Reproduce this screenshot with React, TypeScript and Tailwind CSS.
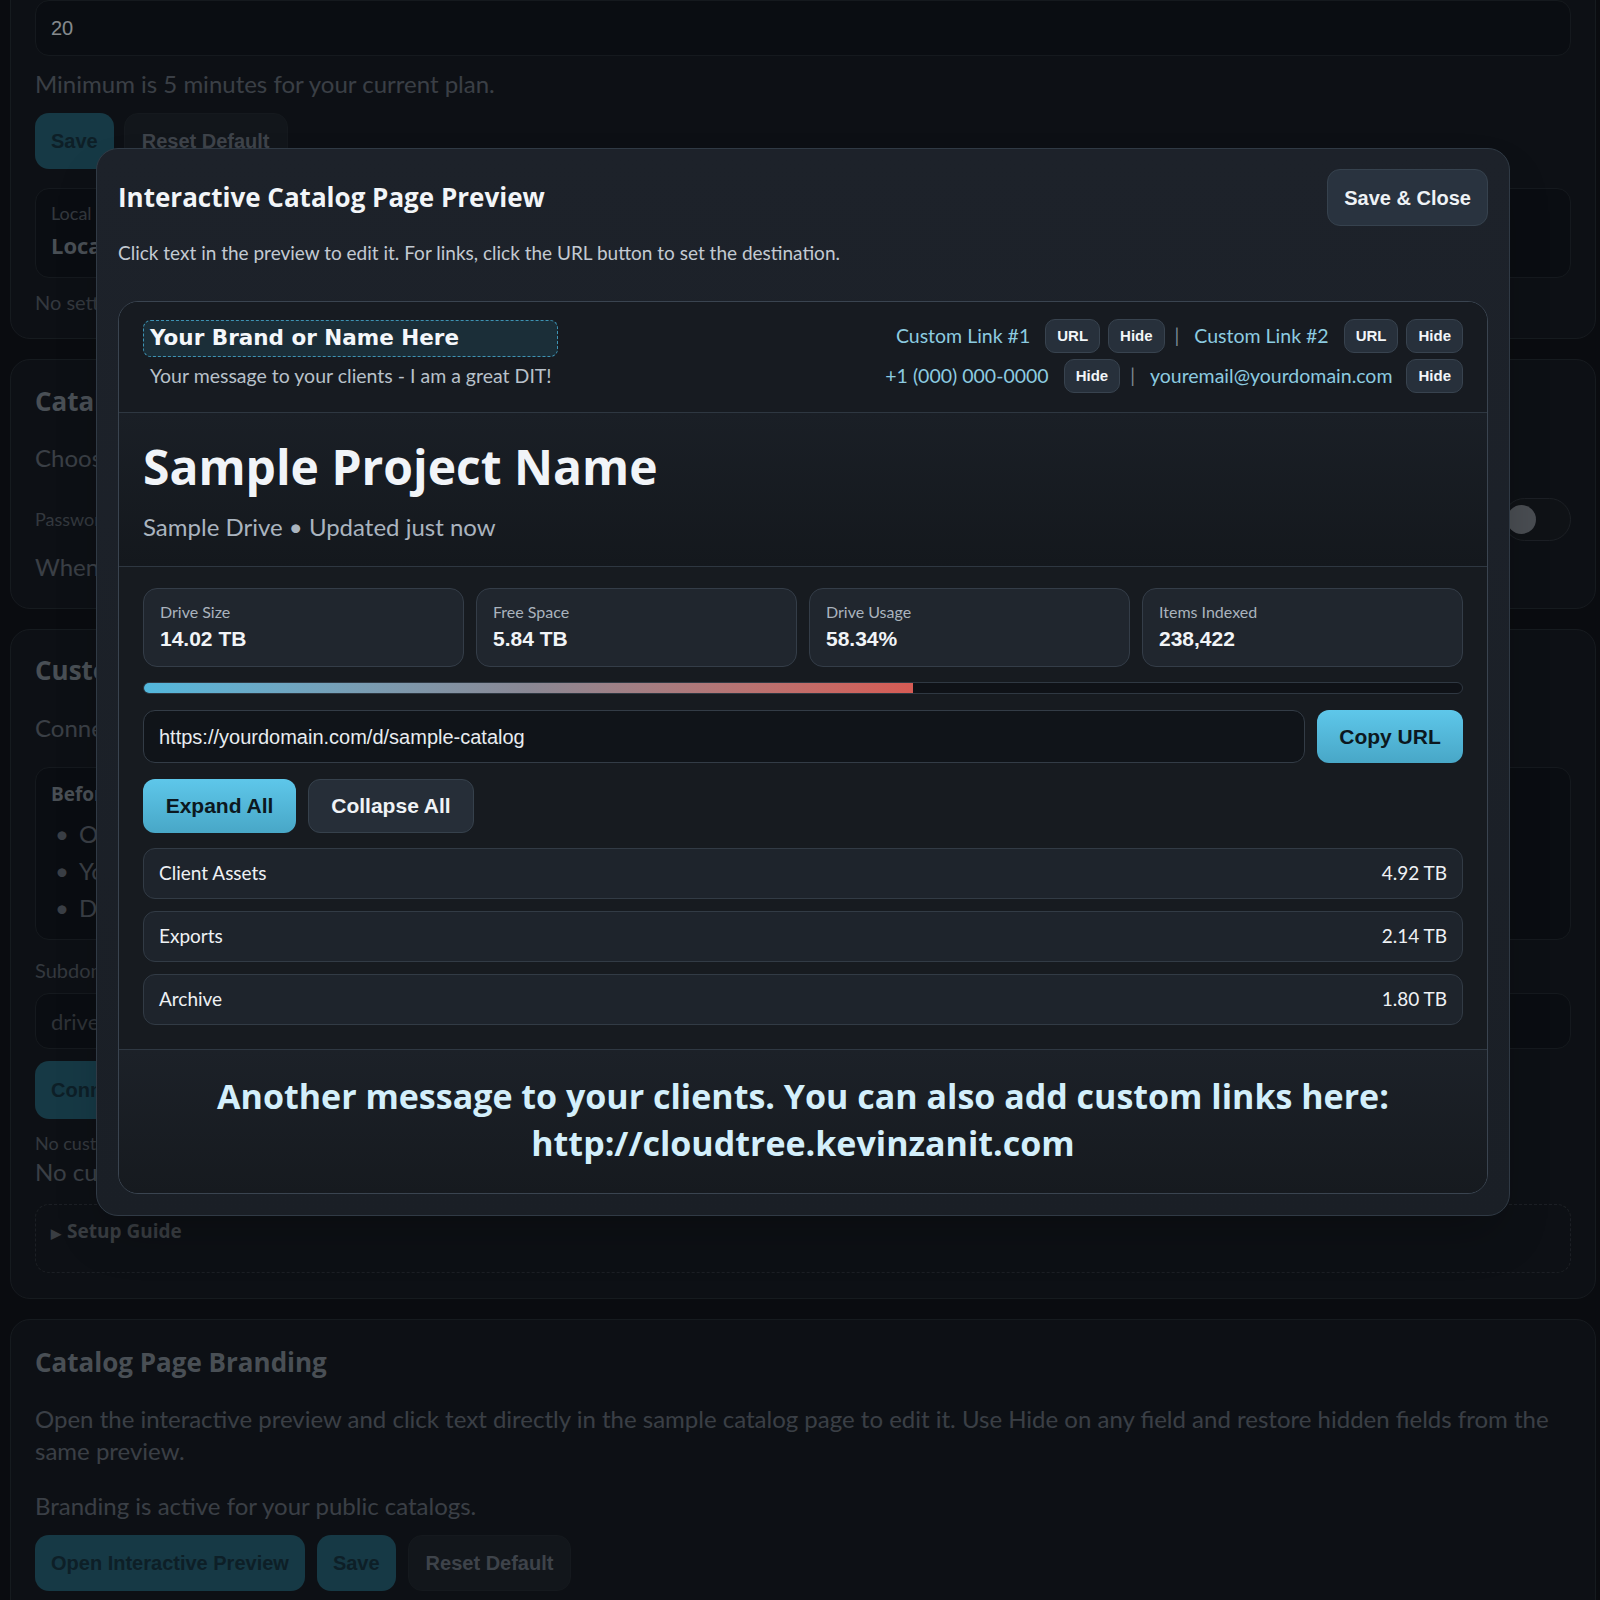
import React from "react";

const lato = "font-['Lato','Noto_Sans',sans-serif]";
const heavy = "font-['Open_Sans','Lato',sans-serif]";
const black = "font-['DejaVu_Sans','Open_Sans',sans-serif]";
const helv = "font-['Liberation_Sans','Arial',sans-serif]";

// background page (sits behind the dimming overlay)
const card = "rounded-[20px] border border-[#262d35] bg-[#171c23] px-6";
const box = "rounded-[14px] border border-[#232a32] bg-[#12171e]";
const tealBtn = `h-[56px] rounded-[14px] bg-[#265f73] px-[16px] text-[20px] font-bold text-[#173441] ${helv}`;
const resetBtn = `h-[56px] rounded-[14px] border border-[#232a32] bg-[#1e252d] px-[17px] text-[20px] font-bold text-[#68707c] ${helv}`;

function SmallBtn({ children }: { children: React.ReactNode }) {
  return (
    <button
      className={`h-[34px] rounded-[10px] border border-[#38434f] bg-[#27303b] px-[11px] text-[15px] font-bold text-[#f2f5f8] ${helv}`}
    >
      {children}
    </button>
  );
}

function Sep() {
  return <span className="ml-[10px] mr-[15px] text-[19px] text-[#7d8994]">|</span>;
}

function Stat({ label, value }: { label: string; value: string }) {
  return (
    <div className="rounded-[14px] border border-[#343d48] bg-[#20262e] px-4 pt-[13px] pb-[14px]">
      <div className="text-[16px] leading-[20px] text-[#aab3bd]">{label}</div>
      <div className={`mt-[4px] text-[21px] leading-[26px] font-bold text-[#f1f4f7] ${helv}`}>{value}</div>
    </div>
  );
}

function FolderRow({ name, size }: { name: string; size: string }) {
  return (
    <div className="flex h-[51px] items-center justify-between rounded-[12px] border border-[#323b45] bg-[#1e242c] px-[15px] text-[19px] text-[#eef1f4]">
      <span>{name}</span>
      <span>{size}</span>
    </div>
  );
}

function BackgroundPage() {
  return (
    <div className="flex flex-col gap-[20px] pl-[10px] pr-[4px]">
      <div className={`${card} -mt-[25px] pt-6 pb-[23px]`}>
        <div className={`${box} flex h-[56px] items-center px-[15px] text-[20px] text-[#dfe4ea] ${helv}`}>20</div>
        <p className="mt-[13px] text-[24px] leading-[30px] text-[#626a75]">Minimum is 5 minutes for your current plan.</p>
        <div className="mt-[14px] flex gap-[10px]">
          <button className={tealBtn}>Save</button>
          <button className={resetBtn}>Reset Default</button>
        </div>
        <div className={`${box} mt-[19px] h-[90px] px-[15px] pt-[13px]`}>
          <div className="text-[18px] leading-[22px] text-[#565e68]">Local Storage</div>
          <div className={`mt-[6px] text-[22px] leading-[30px] font-bold text-[#7b848e] ${heavy}`}>Local Drive</div>
        </div>
        <p className="mt-[11px] text-[20px] leading-[26px] text-[#565e68]">No settings changed yet.</p>
      </div>

      <div className={`${card} pt-6 pb-[26px]`}>
        <h2 className={`text-[26px] leading-[34px] font-bold text-[#7b848e] ${heavy}`}>Catalog Access</h2>
        <p className="mt-[25px] text-[24px] leading-[30px] text-[#626a75]">Choose who can view your catalogs.</p>
        <div className="mt-[25px] flex h-[43px] items-center justify-between">
          <span className="text-[18px] text-[#565e68]">Password protection</span>
          <div className="flex h-[43px] w-[68px] items-center rounded-full border border-[#2f353e] bg-[#191e25] px-[3px]">
            <div className="h-[29px] w-[29px] rounded-full bg-[#7b8089]" />
          </div>
        </div>
        <p className="mt-[11px] text-[24px] leading-[30px] text-[#626a75]">When enabled, visitors need a password.</p>
      </div>

      <div className={`${card} pt-[23px] pb-[25px]`}>
        <h2 className={`text-[26px] leading-[34px] font-bold text-[#7b848e] ${heavy}`}>Custom Domain</h2>
        <p className="mt-[26px] text-[24px] leading-[30px] text-[#626a75]">Connect your own subdomain.</p>
        <div className={`${box} mt-[24px] h-[173px] px-[15px] pt-[13px]`}>
          <div className={`text-[19px] leading-[26px] font-bold text-[#7b848e] ${heavy}`}>Before you start</div>
          <ul className="mt-[8px] text-[24px] leading-[37px] text-[#626a75]">
            <li className="flex gap-[10px] pl-[4px]"><span>•</span>Open your DNS provider</li>
            <li className="flex gap-[10px] pl-[4px]"><span>•</span>You need a CNAME record</li>
            <li className="flex gap-[10px] pl-[4px]"><span>•</span>DNS can take a while</li>
          </ul>
        </div>
        <div className="mt-[17px] text-[20px] leading-[26px] text-[#565e68]">Subdomain</div>
        <div className={`${box} mt-[10px] flex h-[56px] items-center px-[15px] text-[22px] text-[#4d545d]`}>drive.yourdomain.com</div>
        <button className={`${tealBtn} mt-[12px] h-[58px]`}>Connect Domain</button>
        <p className="mt-[13px] text-[18px] leading-[22px] text-[#565e68]">No custom domain yet.</p>
        <p className="mt-[3px] text-[24px] leading-[30px] text-[#626a75]">No custom domain connected.</p>
        <div className={`mt-[17px] h-[69px] rounded-[14px] border border-dashed border-[#2f353e] px-[15px] pt-[13px] text-[19px] leading-[26px] font-bold text-[#60676f] ${heavy}`}>
          <span className="mr-[6px] text-[13px]">▶</span>Setup Guide
        </div>
      </div>

      <div className={`${card} pt-[25px] pb-[30px]`}>
        <h2 className={`text-[26px] leading-[34px] font-bold text-[#7b848e] ${heavy}`}>Catalog Page Branding</h2>
        <p className="mt-[24px] text-[24px] leading-[32px] text-[#626a75]">
          Open the interactive preview and click text directly in the sample catalog page to edit it. Use Hide on any field and restore hidden fields from the same preview.
        </p>
        <p className="mt-[23px] text-[24px] leading-[32px] text-[#626a75]">Branding is active for your public catalogs.</p>
        <div className="mt-[13px] flex gap-[12px]">
          <button className={tealBtn}>Open Interactive Preview</button>
          <button className={tealBtn}>Save</button>
          <button className={resetBtn}>Reset Default</button>
        </div>
      </div>
    </div>
  );
}

function PreviewModal() {
  const cyan = `rounded-[12px] bg-gradient-to-b from-[#5ec7ea] to-[#48a7c7] text-[21px] font-bold text-[#0c1820] ${helv}`;
  return (
    <div className="absolute left-[96px] top-[148px] w-[1414px] rounded-[22px] border border-[#303a45] bg-gradient-to-b from-[#1d222a] to-[#1a1f26] px-[21px] pt-[20px] pb-[21px] shadow-2xl">
      <div className="flex items-center justify-between">
        <h1 className={`text-[26px] font-bold text-[#f2f5f8] ${heavy}`}>Interactive Catalog Page Preview</h1>
        <button
          className={`h-[57px] rounded-[13px] border border-[#36424e] bg-[#29333f] px-[16px] text-[20px] font-bold text-[#eef2f5] ${helv}`}
        >
          Save &amp; Close
        </button>
      </div>
      <p className="mt-[14px] text-[19px] leading-[26px] text-[#c3cad2]">
        Click text in the preview to edit it. For links, click the URL button to set the destination.
      </p>

      <div className="mt-[35px] overflow-hidden rounded-[20px] border border-[#3a4450] bg-[#15191e]">
        <div className="flex items-start justify-between border-b border-[#2e3741] bg-[#171b21] px-6 pt-[17px] pb-[19px]">
          <div>
            <div className={`mt-[1px] flex h-[37px] w-[415px] items-center rounded-[8px] border border-dashed border-[#3d93b4] bg-[#1b2e38] px-[6px] text-[21.5px] font-bold text-[#f4f7fa] ${black}`}>
              Your Brand or Name Here
            </div>
            <p className="mt-[7px] pl-[7px] text-[19.5px] leading-[24px] text-[#b8c1ca]">
              Your message to your clients - I am a great DIT!
            </p>
          </div>
          <div className="flex flex-col items-end gap-[6px]">
            <div className="flex items-center">
              <span className="text-[19.5px] text-[#8ccbe0]">Custom Link #1</span>
              <div className="ml-[15px] flex gap-2">
                <SmallBtn>URL</SmallBtn>
                <SmallBtn>Hide</SmallBtn>
              </div>
              <Sep />
              <span className="text-[19.5px] text-[#8ccbe0]">Custom Link #2</span>
              <div className="ml-[15px] flex gap-2">
                <SmallBtn>URL</SmallBtn>
                <SmallBtn>Hide</SmallBtn>
              </div>
            </div>
            <div className="flex items-center">
              <span className="text-[19.5px] text-[#8ccbe0]">+1 (000) 000-0000</span>
              <div className="ml-[15px]">
                <SmallBtn>Hide</SmallBtn>
              </div>
              <Sep />
              <span className="text-[19.5px] text-[#8ccbe0]">youremail@yourdomain.com</span>
              <div className="ml-[14px]">
                <SmallBtn>Hide</SmallBtn>
              </div>
            </div>
          </div>
        </div>

        <div className="border-b border-[#2e3741] bg-gradient-to-b from-[#1a1f26] to-[#14181d] px-6 pt-[24px] pb-[23px]">
          <h2 className={`text-[48px] leading-[60px] font-bold text-[#f1f4f8] ${heavy}`}>Sample Project Name</h2>
          <p className="mt-[14px] text-[24px] leading-[32px] text-[#aab4bf]">Sample Drive • Updated just now</p>
        </div>

        <div className="flex flex-col bg-[#171b20] px-6 pt-[21px] pb-[24px]">
          <div className="grid grid-cols-4 gap-3">
            <Stat label="Drive Size" value="14.02 TB" />
            <Stat label="Free Space" value="5.84 TB" />
            <Stat label="Drive Usage" value="58.34%" />
            <Stat label="Items Indexed" value="238,422" />
          </div>
          <div className="mt-[15px] h-[12px] overflow-hidden rounded-full border border-[#2f3842] bg-[#0f1217]">
            <div className="h-full bg-gradient-to-r from-[#52b8dd] via-[#8a8894] to-[#d65b54]" style={{ width: "58.34%" }} />
          </div>
          <div className="mt-4 flex h-[53px] gap-3">
            <div className={`flex flex-1 items-center rounded-[12px] border border-[#333c46] bg-[#101419] px-[15px] text-[20px] text-[#e8ecf0] ${helv}`}>
              https://yourdomain.com/d/sample-catalog
            </div>
            <button className={`${cyan} w-[146px]`}>Copy URL</button>
          </div>
          <div className="mt-[16px] flex h-[54px] gap-3">
            <button className={`${cyan} w-[153px]`}>Expand All</button>
            <button
              className={`w-[166px] rounded-[12px] border border-[#36414c] bg-[#262e38] text-[21px] font-bold text-[#f0f3f6] ${helv}`}
            >
              Collapse All
            </button>
          </div>
          <div className="mt-[15px] flex flex-col gap-3">
            <FolderRow name="Client Assets" size="4.92 TB" />
            <FolderRow name="Exports" size="2.14 TB" />
            <FolderRow name="Archive" size="1.80 TB" />
          </div>
        </div>

        <div className={`border-t border-[#2f3842] bg-gradient-to-b from-[#1c2128] to-[#161a1f] px-6 pt-[23px] pb-[26px] text-center text-[34px] leading-[47px] font-bold text-[#d3effb] ${heavy}`}>
          Another message to your clients. You can also add custom links here:
          <br />
          http://cloudtree.kevinzanit.com
        </div>
      </div>
    </div>
  );
}

export default function App() {
  return (
    <div className={`relative h-[1600px] w-[1600px] overflow-hidden bg-[#11141b] ${lato}`}>
      <BackgroundPage />
      <div className="absolute inset-0 bg-black/40" />
      <PreviewModal />
    </div>
  );
}
